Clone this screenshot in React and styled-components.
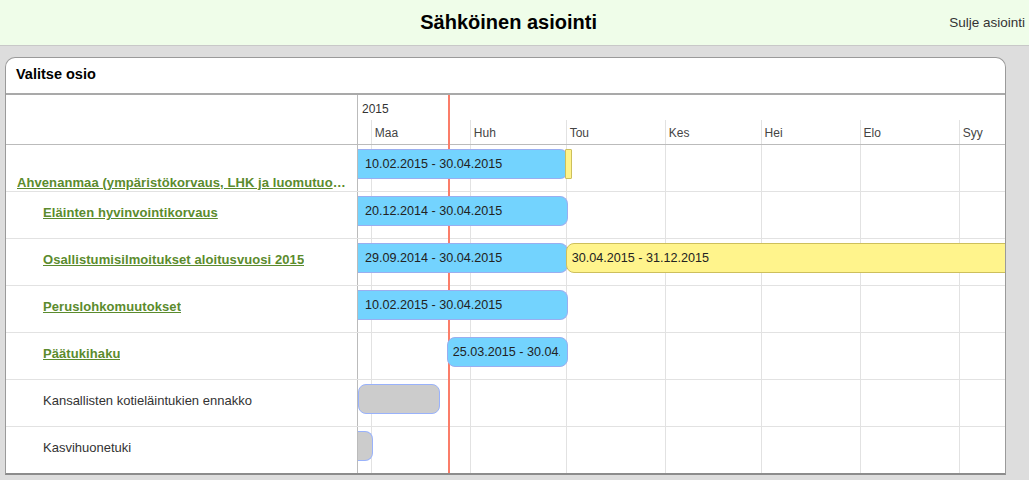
import React from 'react';
import styled, { createGlobalStyle } from 'styled-components';

const GlobalStyle = createGlobalStyle`
  html, body { margin: 0; padding: 0; background: #dddddd; }
  body { font-family: "Liberation Sans", Arial, sans-serif; color: #333; }
  * { box-sizing: border-box; }
`;

const DAY = 3.195;
const VIEW_START = Date.UTC(2015, 1, 25);
const idx = (s) => {
  const [d, m, y] = s.split('.').map(Number);
  return (Date.UTC(y, m - 1, d) - VIEW_START) / 86400000;
};
const px = (s) => idx(s) * DAY;

const MONTHS = [
  { label: 'Maa', start: '01.03.2015' },
  { label: 'Huh', start: '01.04.2015' },
  { label: 'Tou', start: '01.05.2015' },
  { label: 'Kes', start: '01.06.2015' },
  { label: 'Hei', start: '01.07.2015' },
  { label: 'Elo', start: '01.08.2015' },
  { label: 'Syy', start: '01.09.2015' },
];

const ROWS = [
  {
    label: 'Ahvenanmaa (ympäristökorvaus, LHK ja luomutuotanto)',
    link: true,
    level: 0,
    bottom: true,
    bars: [
      { kind: 'blue', from: '10.02.2015', to: '01.05.2015', text: '10.02.2015 - 30.04.2015' },
      { kind: 'yellow', from: '01.05.2015', to: '01.05.2015', text: '', thin: true },
    ],
  },
  {
    label: 'Eläinten hyvinvointikorvaus',
    link: true,
    level: 1,
    bars: [{ kind: 'blue', from: '20.12.2014', to: '01.05.2015', text: '20.12.2014 - 30.04.2015' }],
  },
  {
    label: 'Osallistumisilmoitukset aloitusvuosi 2015',
    link: true,
    level: 1,
    bars: [
      { kind: 'blue', from: '29.09.2014', to: '01.05.2015', text: '29.09.2014 - 30.04.2015' },
      { kind: 'yellow', from: '01.05.2015', to: '01.01.2016', text: '30.04.2015 - 31.12.2015' },
    ],
  },
  {
    label: 'Peruslohkomuutokset',
    link: true,
    level: 1,
    bars: [{ kind: 'blue', from: '10.02.2015', to: '01.05.2015', text: '10.02.2015 - 30.04.2015' }],
  },
  {
    label: 'Päätukihaku',
    link: true,
    level: 1,
    bars: [{ kind: 'blue', from: '25.03.2015', to: '01.05.2015', text: '25.03.2015 - 30.04.2015', shift: -0.8 }],
  },
  {
    label: 'Kansallisten kotieläintukien ennakko',
    link: false,
    level: 1,
    bars: [{ kind: 'grey', from: '25.02.2015', to: '22.03.2015', text: '' }],
  },
  {
    label: 'Kasvihuonetuki',
    link: false,
    level: 1,
    bars: [{ kind: 'grey', from: '01.02.2015', to: '01.03.2015', text: '' }],
  },
];

const COLORS = {
  blue: { bg: '#73d3fe', border: '#9aaef0' },
  yellow: { bg: '#fff48c', border: '#cdbf5c' },
  grey: { bg: '#cccccc', border: '#99b2fb' },
};

const Header = styled.header`
  height: 46px;
  background: #effde9;
  border-bottom: 1px solid #c8c8c8;
  display: flex;
  align-items: center;
  padding: 0 4px 0 0;
`;

const Title = styled.h1`
  flex: 1;
  margin: 0 0 0 68px;
  text-align: center;
  font-size: 20px;
  font-weight: bold;
  color: #000;
`;

const CloseLink = styled.a`
  font-size: 13.5px;
  color: #333;
  text-decoration: none;
  cursor: pointer;
`;

const Main = styled.main`
  padding: 11px 23px 0 5px;
`;

const Panel = styled.section`
  background: #fff;
  border: 1px solid #9a9a9a;
  border-bottom: 2px solid #8c8c8c;
  border-radius: 10px 10px 0 0;
  overflow: hidden;
`;

const PanelTitle = styled.div`
  height: 37px;
  display: flex;
  align-items: center;
  padding: 0 10px 3px;
  font-size: 14.5px;
  font-weight: bold;
  color: #000;
  border-bottom: 2px solid #a9a9a9;
`;

const Table = styled.div`
  position: relative;
`;

const Row = styled.div`
  position: relative;
  display: grid;
  grid-template-columns: 352px 1fr;
  height: ${(p) => (p.$head ? 50 : p.$last ? 46 : 47)}px;
  border-bottom: ${(p) =>
    p.$head ? '1px solid #bbbbbb' : p.$last ? 'none' : '1px solid #e2e2e2'};
`;

const LabelCell = styled.div`
  border-right: 1px solid #bbbbbb;
  display: flex;
  align-items: ${(p) => (p.$bottom ? 'flex-end' : 'center')};
  padding: 0 10px ${(p) => (p.$bottom ? 1 : 5)}px ${(p) => (p.$level ? 37 : 11)}px;
  min-width: 0;
`;

const RowLink = styled.a`
  font-size: 13px;
  font-weight: bold;
  letter-spacing: 0.08px;
  color: #5b8b2d;
  text-decoration: underline;
  white-space: nowrap;
  overflow: hidden;
  text-overflow: ellipsis;
  cursor: pointer;
`;

const RowText = styled.span`
  font-size: 13px;
  color: #333;
  white-space: nowrap;
`;

const TimeCell = styled.div`
  position: relative;
  overflow: hidden;
`;

const HeadTime = styled.div`
  position: relative;
  overflow: hidden;
  display: grid;
  grid-template-rows: 25px 1fr;
`;

const Year = styled.div`
  font-size: 12px;
  color: #333;
  padding: 7px 0 0 4px;
`;

const MonthStrip = styled.div`
  position: relative;
`;

const MonthLine = styled.div`
  position: absolute;
  top: 0;
  bottom: 0;
  width: 1px;
  background: #e2e2e2;
`;

const MonthLabel = styled.span`
  position: absolute;
  top: 6px;
  font-size: 12px;
  color: #444;
  padding-left: 4px;
`;

const Bar = styled.div`
  position: absolute;
  z-index: 2;
  top: ${(p) => p.$top}px;
  height: 30px;
  background: ${(p) => COLORS[p.$kind].bg};
  border: 1px solid ${(p) => COLORS[p.$kind].border};
  border-left-width: ${(p) => (p.$clipLeft ? 0 : 1)}px;
  border-radius: ${(p) => (p.$thin ? '1px' : p.$clipLeft ? '0 8px 8px 0' : '8px')};
  padding: 0 ${(p) => (p.$thin ? 0 : 7)}px 0 ${(p) => (p.$clipLeft ? 7 : 5)}px;
`;

const BarLabel = styled.span`
  display: block;
  font-size: 12.6px;
  line-height: 28px;
  color: #222;
  white-space: nowrap;
  overflow: hidden;
`;

const TodayLine = styled.div`
  position: absolute;
  z-index: 1;
  top: 0;
  bottom: 0;
  width: 2px;
  background: #fb7d69;
  pointer-events: none;
`;

function GridLines() {
  return MONTHS.map((m) => <MonthLine key={m.label} style={{ left: px(m.start) }} />);
}

export default function App() {
  const today = 352 + 28.5 * DAY - 1;
  return (
    <>
      <GlobalStyle />
      <Header>
        <Title>Sähköinen asiointi</Title>
        <CloseLink>Sulje asiointi</CloseLink>
      </Header>
      <Main>
        <Panel>
          <PanelTitle>Valitse osio</PanelTitle>
          <Table>
            <TodayLine style={{ left: today }} />
            <Row $head>
              <LabelCell />
              <HeadTime>
                <Year>2015</Year>
                <MonthStrip>
                  {MONTHS.map((m) => (
                    <React.Fragment key={m.label}>
                      <MonthLine style={{ left: px(m.start) }} />
                      <MonthLabel style={{ left: px(m.start) }}>{m.label}</MonthLabel>
                    </React.Fragment>
                  ))}
                </MonthStrip>
              </HeadTime>
            </Row>
            {ROWS.map((r, i) => (
              <Row key={r.label} $last={i === ROWS.length - 1}>
                <LabelCell $level={r.level} $bottom={r.bottom}>
                  {r.link ? <RowLink>{r.label}</RowLink> : <RowText>{r.label}</RowText>}
                </LabelCell>
                <TimeCell>
                  <GridLines />
                  {r.bars.map((b, j) => {
                    const start = px(b.from) + (b.shift || 0);
                    const end = px(b.to) + 2;
                    const clipLeft = start < 0;
                    const left = clipLeft ? 0 : start;
                    const width = b.thin ? 3 : end - left;
                    return (
                      <Bar
                        key={j}
                        $kind={b.kind}
                        $clipLeft={clipLeft}
                        $thin={b.thin}
                        $top={4}
                        style={{ left: b.thin ? start - 0.5 : left, width }}
                      >
                        {b.text && <BarLabel>{b.text}</BarLabel>}
                      </Bar>
                    );
                  })}
                </TimeCell>
              </Row>
            ))}
          </Table>
        </Panel>
      </Main>
    </>
  );
}
